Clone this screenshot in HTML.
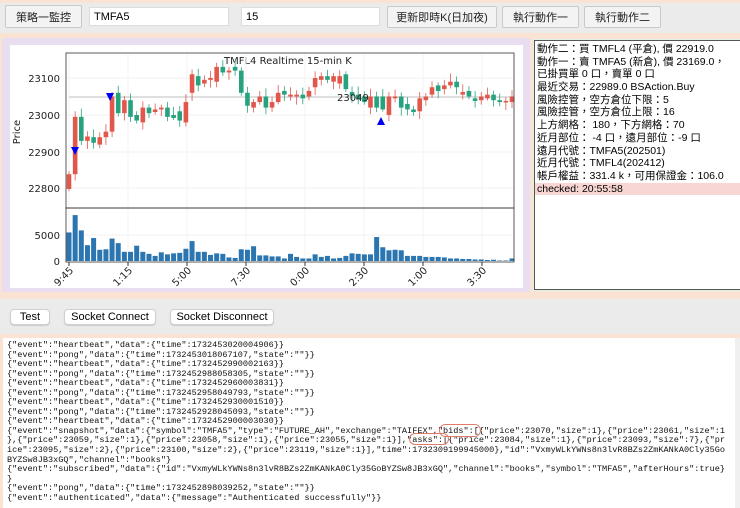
<!DOCTYPE html>
<html><head><meta charset="utf-8"><style>
*{box-sizing:border-box;margin:0;padding:0}
body{width:740px;height:508px;overflow:hidden;background:#fbe3d3;font-family:"Liberation Sans","Noto Sans CJK TC",sans-serif;position:relative}
.abs{position:absolute}
.btn{position:absolute;background:#f3f3f3;border:1px solid #c9c9c9;font-size:11px;color:#222;display:flex;align-items:center;justify-content:center;border-radius:2px}
.inp{position:absolute;background:#fff;border:1px solid #dcdcdc;font-size:11px;padding-left:4px;display:flex;align-items:center}
.btn2{position:absolute;background:#fff;border:1px solid #d0d0d0;border-radius:4px;font-size:11px;display:flex;align-items:center;justify-content:center;box-shadow:0 1px 1px #ccc}
#info div{height:12.7px;line-height:12.7px;font-size:10.5px;white-space:nowrap;padding-left:2px}
#log{font-family:"Liberation Mono",monospace;font-size:8.55px;line-height:9.55px;white-space:pre;color:#111}
</style></head><body>
<div class="abs" style="left:0;top:3px;width:740px;height:30px;background:#ebebeb"></div>
<div class="btn" style="left:5px;top:5px;width:77px;height:23px">策略一監控</div>
<div class="inp" style="left:89px;top:7px;width:140px;height:19px">TMFA5</div>
<div class="inp" style="left:241px;top:7px;width:139px;height:19px">15</div>
<div class="btn" style="left:387px;top:6px;width:110px;height:22px">更新即時K(日加夜)</div>
<div class="btn" style="left:502px;top:6px;width:77px;height:22px">執行動作一</div>
<div class="btn" style="left:584px;top:6px;width:77px;height:22px">執行動作二</div>

<div class="abs" style="left:2px;top:38px;width:528px;height:254px;background:#e8deef"></div>
<div class="abs" style="left:10px;top:45px;width:513px;height:243px;background:#fff"></div>
<svg class="abs" style="left:0;top:0" width="530" height="288" id="ch">
<g font-family="DejaVu Sans,sans-serif" font-size="10" fill="#222">
<text x="224" y="64">TMFL4 Realtime 15-min K</text>
<text x="60" y="82" text-anchor="end">23100</text>
<text x="60" y="119" text-anchor="end">23000</text>
<text x="60" y="156" text-anchor="end">22900</text>
<text x="60" y="192" text-anchor="end">22800</text>
<text x="60" y="239" text-anchor="end">5000</text>
<text x="60" y="265" text-anchor="end">0</text>
<text transform="translate(20,132) rotate(-90)" text-anchor="middle">Price</text>
</g>
<g id="grid" stroke="#eee" stroke-width="0.7"></g>
<line x1="69" y1="97" x2="514" y2="97" stroke="#ccc" stroke-width="1.2"/>
<g id="cd"></g>
<g id="vol" fill="#2b76b0"></g>
<rect x="66" y="53" width="448" height="155" fill="none" stroke="#333" stroke-width="0.8"/>
<rect x="66" y="208" width="448" height="54" fill="none" stroke="#333" stroke-width="0.8"/>
<text x="337" y="101" font-family="DejaVu Sans,sans-serif" font-size="10" fill="#222">23049</text>
<path d="M71 147 L79 147 L75 155Z" fill="#0000ee"/>
<path d="M106 93 L114 93 L110 101Z" fill="#0000ee"/>
<path d="M377 125 L385 125 L381 117Z" fill="#0000ee"/>
<g id="xl" font-family="DejaVu Sans,sans-serif" font-size="10" fill="#222"></g>
</svg>

<div class="abs" style="left:534px;top:40px;width:206px;height:250px;background:#fff;border:1px solid #555;border-right:none;outline:1px solid #dff0e6"></div>
<div id="info" class="abs" style="left:535px;top:43px;width:205px">
<div>動作二：買 TMFL4 (平倉), 價 22919.0</div>
<div>動作一：賣 TMFA5 (新倉), 價 23169.0，</div>
<div>已掛買單 0 口，賣單 0 口</div>
<div>最近交易：22989.0 BSAction.Buy</div>
<div>風險控管，空方倉位下限：5</div>
<div>風險控管，空方倉位上限：16</div>
<div>上方網格： 180，下方網格：70</div>
<div>近月部位： -4 口，遠月部位：-9 口</div>
<div>遠月代號：TMFA5(202501)</div>
<div>近月代號：TMFL4(202412)</div>
<div>帳戶權益：331.4 k，可用保證金：106.0</div>
<div style="background:#f8d6d4">checked: 20:55:58</div>
</div>

<div class="abs" style="left:0;top:299px;width:740px;height:35px;background:#ebebeb"></div>
<div class="btn2" style="left:10px;top:309px;width:40px;height:16px">Test</div>
<div class="btn2" style="left:64px;top:309px;width:92px;height:16px">Socket Connect</div>
<div class="btn2" style="left:170px;top:309px;width:104px;height:16px">Socket Disconnect</div>

<div class="abs" style="left:3px;top:338px;width:737px;height:170px;background:#fff"></div>
<div class="abs" style="left:735px;top:338px;width:5px;height:170px;background:#f0f0f0"></div>
<div id="log" class="abs" style="left:7px;top:341px">{"event":"heartbeat","data":{"time":1732453020004906}}
{"event":"pong","data":{"time":1732453018067107,"state":""}}
{"event":"heartbeat","data":{"time":1732452990002163}}
{"event":"pong","data":{"time":1732452988058305,"state":""}}
{"event":"heartbeat","data":{"time":1732452960003831}}
{"event":"pong","data":{"time":1732452958049793,"state":""}}
{"event":"heartbeat","data":{"time":1732452930001510}}
{"event":"pong","data":{"time":1732452928045093,"state":""}}
{"event":"heartbeat","data":{"time":1732452900003030}}
{"event":"snapshot","data":{"symbol":"TMFA5","type":"FUTURE_AH","exchange":"TAIFEX","bids":[{"price":23070,"size":1},{"price":23061,"size":1
},{"price":23059,"size":1},{"price":23058,"size":1},{"price":23055,"size":1}],"asks":[{"price":23084,"size":1},{"price":23093,"size":7},{"pr
ice":23095,"size":2},{"price":23100,"size":2},{"price":23119,"size":1}],"time":1732309199945000},"id":"VxmyWLkYWNs8n3lvR8BZs2ZmKANkA0Cly35Go
BYZSw8JB3xGQ","channel":"books"}
{"event":"subscribed","data":{"id":"VxmyWLkYWNs8n3lvR8BZs2ZmKANkA0Cly35GoBYZSw8JB3xGQ","channel":"books","symbol":"TMFA5","afterHours":true}
}
{"event":"pong","data":{"time":1732452898039252,"state":""}}
{"event":"authenticated","data":{"message":"Authenticated successfully"}}</div>
<div class="abs" style="left:439px;top:424px;width:42px;height:13px;border:1px solid #e07a6a;border-radius:7px"></div>
<div class="abs" style="left:409px;top:433px;width:40px;height:12px;border:1px solid #e07a6a;border-radius:7px"></div>

<script>
var o=[[22800,22840],[22840,22995],[22995,22930],[22930,22942],[22940,22925],[22920,22940],[22940,22955],[22955,23050],[23060,23005],[23005,23040],[23040,22995],[23000,22985],[22980,23020],[23020,23005],[23008,23015],[23015,23020],[23020,22995],[23000,22992],[23010,22985],[22980,23035],[23060,23110],[23105,23080],[23085,23095],[23095,23100],[23090,23130],[23130,23115],[23115,23120],[23130,23120],[23120,23060],[23060,23025],[23020,23035],[23035,23050],[23050,23020],[23020,23035],[23035,23060],[23065,23055],[23050,23055],[23050,23055],[23055,23045],[23050,23065],[23075,23100],[23095,23105],[23105,23095],[23090,23105],[23085,23105],[23110,23070],[23062,23052],[23055,23042],[23050,23035],[23020,23050],[23050,23020],[23050,23015],[23000,23050],[23045,23050],[23050,23020],[23030,23015],[23015,23008],[23010,23045],[23040,23050],[23055,23075],[23080,23065],[23070,23080],[23080,23090],[23090,23075],[23055,23062],[23065,23050],[23045,23038],[23040,23050],[23045,23055],[23055,23040],[23040,23035],[23035,23038],[23035,23050]];
var v=[5600,9000,6000,3100,4500,2200,2300,4400,3500,1800,1800,3000,1800,1400,1000,1700,1300,1500,1600,2400,3900,1800,1800,1200,1500,1400,700,600,2300,2200,2900,1100,1100,900,900,500,1400,800,500,500,1300,800,1000,500,600,1000,1500,1400,1300,1300,4700,2700,2100,2200,2100,1000,1000,1000,800,800,800,700,500,500,400,400,300,300,200,250,100,100,500];
var n=o.length,st=(512-69)/(n-1),cd='',vo='';
function y(p){return 115-(p-23000)*0.37}
for(var i=0;i<n;i++){var x=69+i*st,a=o[i][0],b=o[i][1],up=b>=a,c=up?'#e0584c':'#27a27f';
var hi=Math.max(a,b)+8+(i*7%15),lo=Math.min(a,b)-6-(i*11%17);
cd+='<line x1="'+x+'" x2="'+x+'" y1="'+y(hi)+'" y2="'+y(lo)+'" stroke="'+c+'" stroke-width="0.8"/>';
var t=y(Math.max(a,b)),h=Math.max(1.5,Math.abs(a-b)*0.37);
cd+='<rect x="'+(x-2.3)+'" y="'+t+'" width="4.6" height="'+h+'" fill="'+c+'"/>';
var vh=v[i]/1000*5.1;vo+='<rect x="'+(x-2.5)+'" y="'+(261-vh)+'" width="5" height="'+vh+'"/>';}
document.getElementById('cd').innerHTML=cd;document.getElementById('vol').innerHTML=vo;
var g='',xl='',lab=['9:45','1:15','5:00','7:30','0:00','2:30','1:00','3:30'];
for(var k=0;k<8;k++){var X=69+k*59;g+='<line x1="'+X+'" x2="'+X+'" y1="53" y2="262"/>';
xl+='<line x1="'+X+'" x2="'+X+'" y1="262" y2="266" stroke="#333"/><text transform="translate('+(X+5)+',271) rotate(-45)" text-anchor="end">'+lab[k]+'</text>';}
[78,115,152,188,235].forEach(function(Y){g+='<line x1="66" x2="514" y1="'+Y+'" y2="'+Y+'"/>';});
document.getElementById('grid').innerHTML=g;document.getElementById('xl').innerHTML=xl;
</script>
</body></html>
